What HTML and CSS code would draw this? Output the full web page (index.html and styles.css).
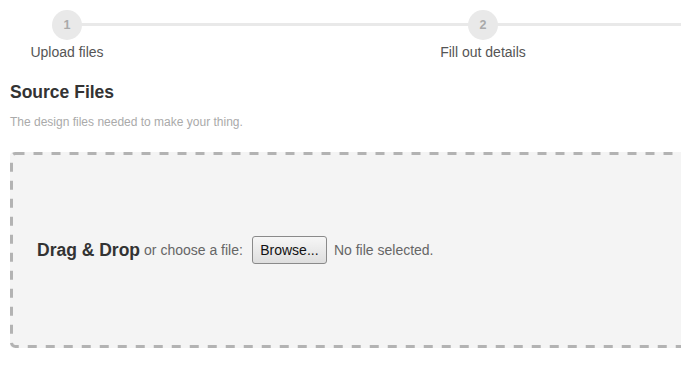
FILE: index.html
```html
<!DOCTYPE html>
<html>
<head>
<meta charset="utf-8">
<link rel="stylesheet" href="styles.css">
</head>
<body>
<div class="page">
  <div class="steps">
    <div class="step step-1">
      <div class="circle">1</div>
      <div class="label">Upload files</div>
    </div>
    <div class="step step-2">
      <div class="circle">2</div>
      <div class="label">Fill out details</div>
    </div>
  </div>
  <h2 class="title">Source Files</h2>
  <p class="subtitle">The design files needed to make your thing.</p>
  <div class="dropzone">
    <svg class="dash" width="706" height="196" viewBox="0 0 706 196" aria-hidden="true">
      <rect x="1.5" y="1.5" width="703" height="193" rx="4" ry="4" fill="none" stroke="#b3b3b3" stroke-width="3" stroke-dasharray="9 9"/>
    </svg>
    <span class="dd">Drag &amp; Drop</span>
    <span class="or">or choose a file:</span>
    <button class="browse">Browse...</button>
    <span class="nofile">No file selected.</span>
  </div>
</div>
</body>
</html>
```
FILE: styles.css
```css
html, body {
  margin: 0;
  padding: 0;
  background: #fff;
  overflow: hidden;
}
body {
  font-family: "Liberation Sans", Arial, sans-serif;
  width: 681px;
  height: 365px;
}
.page {
  padding-left: 10px;
}
.steps {
  position: relative;
  display: flex;
  gap: 282px;
  margin-left: -10px;
  padding-top: 10px;
}
.steps::before {
  content: "";
  position: absolute;
  left: 67px;
  right: 0;
  top: 23px;
  height: 3px;
  background: #e9e9e9;
}
.step {
  width: 134px;
  display: flex;
  flex-direction: column;
  align-items: center;
  position: relative;
}
.circle {
  width: 30px;
  height: 30px;
  border-radius: 50%;
  background: #e9e9e9;
  color: #aaa;
  font-size: 12.5px;
  font-weight: bold;
  display: flex;
  align-items: center;
  justify-content: center;
}
.label {
  margin-top: 4px;
  font-size: 14px;
  color: #555;
  line-height: 16px;
}
.title {
  margin: 22px 0 0;
  font-size: 17.5px;
  font-weight: bold;
  color: #333;
  line-height: 20px;
}
.subtitle {
  margin: 13px 0 0;
  font-size: 12px;
  color: #aaa;
  line-height: 14px;
}
.dropzone {
  position: relative;
  margin-top: 23px;
  width: 706px;
  height: 196px;
  box-sizing: border-box;
  border-radius: 4px;
  background: #f4f4f4;
  display: flex;
  align-items: center;
  padding-left: 27px;
}
.dash {
  position: absolute;
  left: 0;
  top: 0;
}
.dd {
  position: relative;
  font-size: 17.5px;
  font-weight: bold;
  color: #333;
}
.or {
  position: relative;
  margin-left: 4px;
  font-size: 14px;
  color: #666;
}
.browse {
  position: relative;
  margin-left: 9px;
  width: 75px;
  height: 28px;
  border: 1px solid #8a8a8a;
  border-radius: 3px;
  background: linear-gradient(#f6f6f6, #dedede);
  font-family: "Liberation Sans", Arial, sans-serif;
  font-size: 14px;
  color: #111;
  padding: 0;
}
.nofile {
  position: relative;
  margin-left: 7px;
  font-size: 14px;
  color: #666;
}
```
